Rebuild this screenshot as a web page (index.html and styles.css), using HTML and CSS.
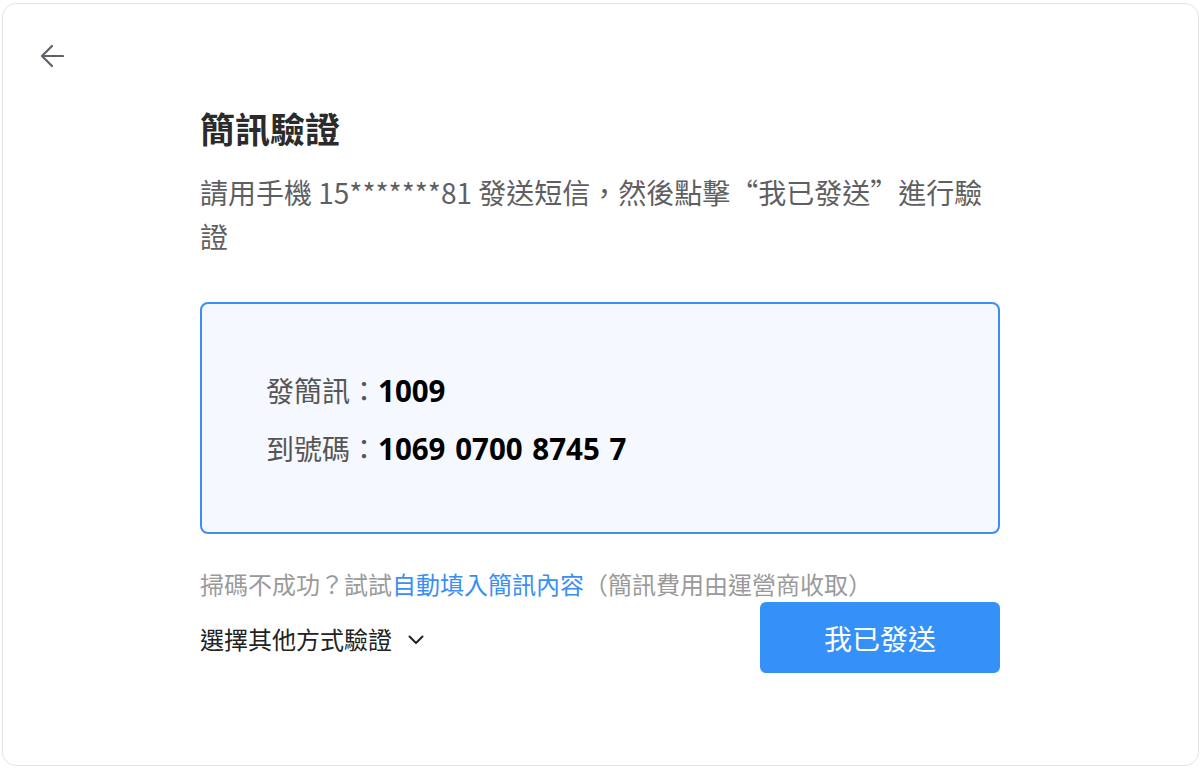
FILE: index.html
```html
<!DOCTYPE html>
<html lang="zh-Hant">
<head>
<meta charset="utf-8">
<title>簡訊驗證</title>
<link rel="stylesheet" href="styles.css">
</head>
<body>
<div class="card">
  <div class="head">
    <svg class="back" width="24" height="24" viewBox="0 0 24 24" fill="none" stroke="#5f6368" stroke-width="2.2" stroke-linecap="round" stroke-linejoin="round"><path d="M23 12H2M12 2L2 12l10 10"/></svg>
  </div>
  <main class="main">
    <h1 class="title">簡訊驗證</h1>
    <p class="desc">請用手機 15*******81 發送短信，然後點擊“我已發送”進行驗證</p>
    <div class="box">
      <div class="line"><span class="label">發簡訊：</span><span class="value">1009</span></div>
      <div class="line second"><span class="label">到號碼：</span><span class="value">1069 0700 8745 7</span></div>
    </div>
    <p class="hint">掃碼不成功？試試<a class="link">自動填入簡訊內容</a>（簡訊費用由運營商收取）</p>
    <div class="actions">
      <div class="other">選擇其他方式驗證
        <svg class="chev" width="16" height="10" viewBox="0 0 16 10" fill="none" stroke="#222" stroke-width="2" stroke-linecap="round" stroke-linejoin="round"><path d="M1.5 1.5L8 8l6.5-6.5"/></svg>
      </div>
      <button class="send">我已發送</button>
    </div>
  </main>
</div>
</body>
</html>
```
FILE: styles.css
```css
html, body {
  margin: 0;
  padding: 0;
  background: #ffffff;
}
body {
  padding: 3px 2px 0 2px;
  font-family: "Noto Sans CJK SC", "Noto Sans CJK TC", "Open Sans", sans-serif;
}
.card {
  box-sizing: border-box;
  width: 1197px;
  height: 763px;
  border: 1px solid #e3e3e6;
  border-radius: 14px;
  background: #fff;
  padding: 40px 0 0 37px;
  display: flex;
  flex-direction: column;
}
.head {
  height: 24px;
  display: flex;
}
.back { display: block; }
.main {
  width: 800px;
  margin-left: 160px;
  display: flex;
  flex-direction: column;
}
.title {
  margin: 36px 0 0;
  font-size: 35px;
  line-height: 48px;
  font-weight: 700;
  color: #2b2b2b;
}
.desc {
  margin: 18px 0 0;
  width: 792px;
  font-size: 28px;
  line-height: 44px;
  color: #5f5f63;
}
.box {
  margin-top: 44px;
  box-sizing: border-box;
  height: 232px;
  border: 2px solid #3a8ef6;
  border-radius: 8px;
  background: #f5f8fe;
  padding: 64px 0 0 64px;
}
.line {
  font-size: 28px;
  line-height: 44px;
}
.line.second { margin-top: 13px; }
.label { color: #555; }
.value {
  color: #000;
  font-weight: 700;
  font-size: 29.5px;
  word-spacing: 2px;
  font-family: "Open Sans", "Noto Sans CJK SC", sans-serif;
}
.hint {
  margin: 33px 0 0;
  font-size: 24px;
  line-height: 34px;
  color: #9a9a9a;
}
.link { color: #3a8ef6; }
.actions {
  margin-top: 1px;
  display: flex;
  align-items: center;
  justify-content: space-between;
}
.other {
  display: flex;
  align-items: center;
  gap: 16px;
  font-size: 24px;
  line-height: 34px;
  color: #222;
  margin-top: 2px;
}
.chev { display: block; margin-top: 2px; }
.send {
  width: 240px;
  height: 71px;
  border: none;
  border-radius: 6px;
  background: #3590f8;
  color: #fff;
  font-family: "Noto Sans CJK SC", "Noto Sans CJK TC", sans-serif;
  font-weight: 400;
  font-size: 28px;
  padding: 0;
}
```
